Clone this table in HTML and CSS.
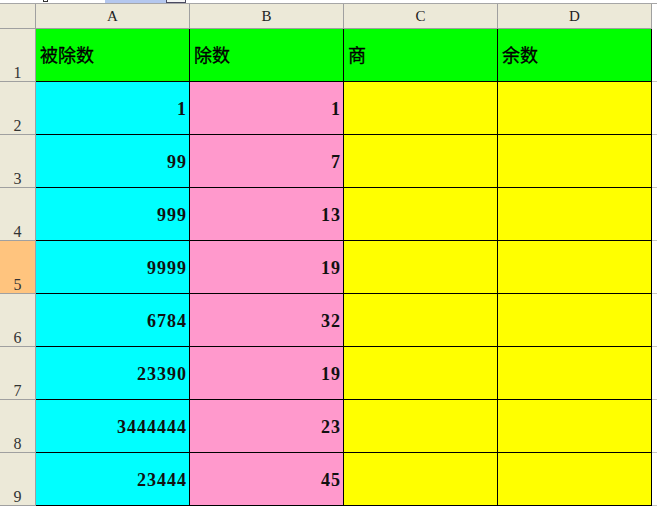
FILE: index.html
```html
<!DOCTYPE html>
<html>
<head>
<meta charset="utf-8">
<link rel="stylesheet" href="styles.css">
</head>
<body>
<div class="topstrip">
  <span class="ts-gap1"></span><span class="ts-mark"></span><span class="ts-gap2"></span><span class="ts-blue"></span><span class="ts-box"></span>
</div>
<div class="sheet">
  <div class="corner"></div>
  <div class="colhead">A</div>
  <div class="colhead">B</div>
  <div class="colhead">C</div>
  <div class="colhead">D</div>
  <div class="edge"></div>

  <div class="rowhead">1</div>
  <div class="cell green zh">被除数</div>
  <div class="cell green zh">除数</div>
  <div class="cell green zh">商</div>
  <div class="cell green zh">余数</div>
  <div class="edge"></div>

  <div class="rowhead">2</div>
  <div class="cell cyan num">1</div>
  <div class="cell pink num">1</div>
  <div class="cell yellow"></div>
  <div class="cell yellow"></div>
  <div class="edge"></div>

  <div class="rowhead">3</div>
  <div class="cell cyan num">99</div>
  <div class="cell pink num">7</div>
  <div class="cell yellow"></div>
  <div class="cell yellow"></div>
  <div class="edge"></div>

  <div class="rowhead">4</div>
  <div class="cell cyan num">999</div>
  <div class="cell pink num">13</div>
  <div class="cell yellow"></div>
  <div class="cell yellow"></div>
  <div class="edge"></div>

  <div class="rowhead active">5</div>
  <div class="cell cyan num">9999</div>
  <div class="cell pink num">19</div>
  <div class="cell yellow"></div>
  <div class="cell yellow"></div>
  <div class="edge"></div>

  <div class="rowhead">6</div>
  <div class="cell cyan num">6784</div>
  <div class="cell pink num">32</div>
  <div class="cell yellow"></div>
  <div class="cell yellow"></div>
  <div class="edge"></div>

  <div class="rowhead">7</div>
  <div class="cell cyan num">23390</div>
  <div class="cell pink num">19</div>
  <div class="cell yellow"></div>
  <div class="cell yellow"></div>
  <div class="edge"></div>

  <div class="rowhead">8</div>
  <div class="cell cyan num">3444444</div>
  <div class="cell pink num">23</div>
  <div class="cell yellow"></div>
  <div class="cell yellow"></div>
  <div class="edge"></div>

  <div class="rowhead">9</div>
  <div class="cell cyan num">23444</div>
  <div class="cell pink num">45</div>
  <div class="cell yellow"></div>
  <div class="cell yellow"></div>
  <div class="edge"></div>
</div>
</body>
</html>
```
FILE: styles.css
```css
* { box-sizing: border-box; }
html, body {
  margin: 0;
  padding: 0;
  background: #ffffff;
  width: 657px;
  height: 507px;
  overflow: hidden;
}
.topstrip {
  height: 4px;
  display: flex;
  border-bottom: 1px solid #a6a6a6;
  background: #ffffff;
}
.topstrip span { display: block; height: 3px; }
.ts-gap1 { width: 43px; }
.ts-mark { width: 5px; height: 2px !important; border: 1px solid #333; border-top: none; }
.ts-gap2 { width: 57px; }
.ts-blue { width: 61px; background: #b4c7ee; }
.ts-box { width: 20px; border: 1px solid #4a4a60; border-top: none; background: #f4f4f4; }

.sheet {
  display: grid;
  grid-template-columns: 36px 154px 154px 154px 154px 5px;
  grid-template-rows: 25px repeat(9, 53px);
}
.corner {
  background: #ece9d8;
  border-right: 1px solid #a0a0a0;
  border-bottom: 1px solid #a0a0a0;
}
.colhead {
  background: #ece9d8;
  border-right: 1px solid #a0a0a0;
  border-bottom: 1px solid #a0a0a0;
  font-family: "Liberation Serif", serif;
  font-size: 15px;
  color: #222;
  display: flex;
  align-items: center;
  justify-content: center;
  padding-top: 1px;
}
.edge {
  border-bottom: 1px solid #c8c8c8;
  background: #ffffff;
}
.sheet > .edge:nth-child(6) { background: #ffffff; border-bottom: none; }
.rowhead {
  background: #ece9d8;
  border-right: 1px solid #a0a0a0;
  border-bottom: 1px solid #a0a0a0;
  font-family: "Liberation Serif", serif;
  font-size: 16px;
  color: #333;
  display: flex;
  align-items: flex-end;
  justify-content: center;
  line-height: 17px;
}
.rowhead.active { background: #ffc47e; }
.cell {
  border-right: 1px solid #000;
  border-bottom: 1px solid #000;
  display: flex;
  align-items: center;
}
.green { background: #00ff00; }
.cyan { background: #00ffff; }
.pink { background: #ff99cc; }
.yellow { background: #ffff00; }
.zh {
  font-family: "Noto Sans CJK SC", sans-serif;
  font-size: 18px;
  color: #000;
  padding-left: 4px;
  padding-bottom: 2px;
  -webkit-text-stroke: 0.3px #000;
}
.num {
  justify-content: flex-end;
  font-family: "Liberation Serif", serif;
  font-weight: bold;
  font-size: 18px;
  letter-spacing: 1px;
  color: #111;
  padding-right: 2px;
  padding-top: 3px;
}
```
